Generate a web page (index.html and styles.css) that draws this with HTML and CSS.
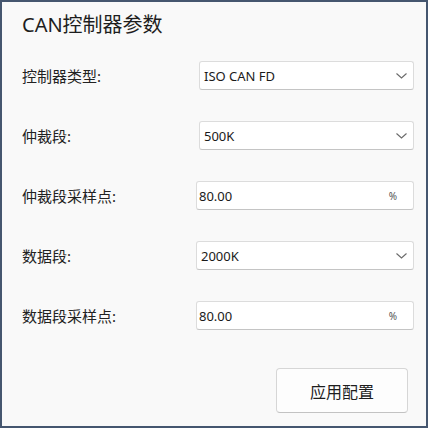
FILE: index.html
```html
<!DOCTYPE html>
<html lang="zh">
<head>
<meta charset="utf-8">
<title>CAN控制器参数</title>
<link rel="stylesheet" href="styles.css">
</head>
<body>
<div class="window">
  <h1 class="title">CAN控制器参数</h1>
  <div class="form">
    <div class="row">
      <span class="label">控制器类型:</span>
      <div class="field select"><span class="value">ISO CAN FD</span><svg class="chev" width="11" height="6" viewBox="0 0 11 6"><path d="M0.5 0.5 L5.5 5 L10.5 0.5" fill="none" stroke="#6a6a6a" stroke-width="1.1"/></svg></div>
    </div>
    <div class="row">
      <span class="label">仲裁段:</span>
      <div class="field select"><span class="value">500K</span><svg class="chev" width="11" height="6" viewBox="0 0 11 6"><path d="M0.5 0.5 L5.5 5 L10.5 0.5" fill="none" stroke="#6a6a6a" stroke-width="1.1"/></svg></div>
    </div>
    <div class="row">
      <span class="label">仲裁段采样点:</span>
      <div class="field input shift"><span class="value">80.00</span><span class="unit">%</span></div>
    </div>
    <div class="row">
      <span class="label">数据段:</span>
      <div class="field select shift"><span class="value">2000K</span><svg class="chev" width="11" height="6" viewBox="0 0 11 6"><path d="M0.5 0.5 L5.5 5 L10.5 0.5" fill="none" stroke="#6a6a6a" stroke-width="1.1"/></svg></div>
    </div>
    <div class="row">
      <span class="label">数据段采样点:</span>
      <div class="field input shift"><span class="value">80.00</span><span class="unit">%</span></div>
    </div>
  </div>
  <div class="actions">
    <button class="btn">应用配置</button>
  </div>
</div>
</body>
</html>
```

FILE: styles.css
```css
* { box-sizing: border-box; }
html, body {
  margin: 0;
  padding: 0;
  background: #f9f9f9;
}
body {
  font-family: "Noto Sans", "Noto Sans CJK SC", sans-serif;
  color: #1c1c1c;
}
.window {
  width: 428px;
  height: 428px;
  border: 2px solid #45566f;
  background: #f9f9f9;
  padding: 9px 12px 0 20px;
  display: flex;
  flex-direction: column;
}
.title {
  margin: 0;
  font-size: 20px;
  line-height: 28px;
  font-weight: 400;
  color: #1e1e1e;
}
.form {
  margin-top: 22px;
  display: flex;
  flex-direction: column;
  gap: 31px;
}
.row {
  display: grid;
  grid-template-columns: 177px 215px;
  align-items: center;
  height: 29px;
}
.label {
  font-size: 15px;
  line-height: 20px;
  color: #222;
}
.field {
  height: 29px;
  background: #ffffff;
  border: 1px solid #dcdcdc;
  border-bottom-color: #c4c4c4;
  border-radius: 3px;
  display: flex;
  align-items: center;
  font-size: 13px;
  color: #1a1a1a;
}
.field.shift { margin-left: -3px; }
.select { padding: 0 6px 0 4px; }
.input { padding: 0 16px 0 2px; }
.value { flex: 1; }
.chev { display: block; }
.unit {
  font-size: 10px;
  color: #555;
}
.actions {
  margin-top: 38px;
  display: flex;
  justify-content: flex-end;
  padding-right: 6px;
}
.btn {
  width: 132px;
  height: 45px;
  background: #fdfdfd;
  border: 1px solid #d6d6d6;
  border-bottom-color: #c2c2c2;
  border-radius: 4px;
  font-family: "Noto Sans CJK SC", sans-serif;
  font-size: 16px;
  color: #1e1e1e;
  padding: 0;
}
```
